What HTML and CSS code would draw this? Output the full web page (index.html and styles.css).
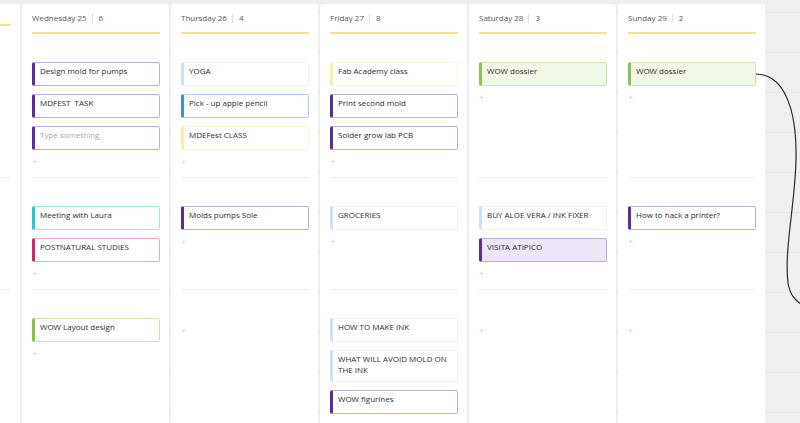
FILE: index.html
```html
<!DOCTYPE html>
<html>
<head>
<meta charset="utf-8">
<link rel="stylesheet" href="styles.css">
</head>
<body>
<div class="board">
  <!-- partial column -->
  <div class="cell cut head"><div class="title"></div><div class="head-line"></div></div>
  <div class="cell cut"><div class="sec"></div></div>
  <div class="cell cut"><div class="sec div"></div></div>
  <div class="cell cut"><div class="sec div"></div></div>

  <!-- Wednesday -->
  <div class="cell head"><div class="title">Wednesday 25<span class="sep"></span>6</div><div class="head-line"></div></div>
  <div class="cell"><div class="sec">
    <div class="card purple">Design mold for pumps</div>
    <div class="card purple">MDFEST&nbsp; TASK</div>
    <div class="card purple placeholder">Type something</div>
    <div class="add">+</div>
  </div></div>
  <div class="cell"><div class="sec div">
    <div class="card cyan">Meeting with Laura</div>
    <div class="card pink">POSTNATURAL STUDIES</div>
    <div class="add">+</div>
  </div></div>
  <div class="cell"><div class="sec div">
    <div class="card green">WOW Layout design</div>
    <div class="add">+</div>
  </div></div>

  <!-- Thursday -->
  <div class="cell head"><div class="title">Thursday 26<span class="sep"></span>4</div><div class="head-line"></div></div>
  <div class="cell"><div class="sec">
    <div class="card pale">YOGA</div>
    <div class="card blue">Pick - up apple pencil</div>
    <div class="card yellow">MDEFest CLASS</div>
    <div class="add">+</div>
  </div></div>
  <div class="cell"><div class="sec div">
    <div class="card purple">Molds pumps Sole</div>
    <div class="add">+</div>
  </div></div>
  <div class="cell"><div class="sec div">
    <div class="add empty">+</div>
  </div></div>

  <!-- Friday -->
  <div class="cell head"><div class="title">Friday 27<span class="sep"></span>8</div><div class="head-line"></div></div>
  <div class="cell"><div class="sec">
    <div class="card yellow">Fab Academy class</div>
    <div class="card purple">Print second mold</div>
    <div class="card purple">Solder grow lab PCB</div>
    <div class="add">+</div>
  </div></div>
  <div class="cell"><div class="sec div">
    <div class="card pale">GROCERIES</div>
    <div class="add">+</div>
  </div></div>
  <div class="cell"><div class="sec div">
    <div class="card pale">HOW TO MAKE INK</div>
    <div class="card pale">WHAT WILL AVOID MOLD ON THE INK</div>
    <div class="card purple">WOW figurines</div>
    <div class="add">+</div>
  </div></div>

  <!-- Saturday -->
  <div class="cell head"><div class="title">Saturday 28<span class="sep"></span>3</div><div class="head-line"></div></div>
  <div class="cell"><div class="sec">
    <div class="card green filled">WOW dossier</div>
    <div class="add">+</div>
  </div></div>
  <div class="cell"><div class="sec div">
    <div class="card pale">BUY ALOE VERA / INK FIXER</div>
    <div class="card purple filled">VISITA ATIPICO</div>
    <div class="add">+</div>
  </div></div>
  <div class="cell"><div class="sec div">
    <div class="add empty">+</div>
  </div></div>

  <!-- Sunday -->
  <div class="cell head"><div class="title">Sunday 29<span class="sep"></span>2</div><div class="head-line"></div></div>
  <div class="cell"><div class="sec">
    <div class="card green filled">WOW dossier</div>
    <div class="add">+</div>
  </div></div>
  <div class="cell"><div class="sec div">
    <div class="card purple">How to hack a printer?</div>
    <div class="add">+</div>
  </div></div>
  <div class="cell"><div class="sec div">
    <div class="add empty">+</div>
  </div></div>
</div>

<svg class="connector" width="800" height="423" viewBox="0 0 800 423">
  <path d="M756 74 C 784 75, 797 108, 796 160 C 795 205, 784 250, 788 283 C 790 295, 795 300, 802 305" fill="none" stroke="#2a2a2a" stroke-width="1.2"/>
</svg>
</body>
</html>
```
FILE: styles.css
```css
html, body {
  margin: 0;
  padding: 0;
}
body {
  width: 800px;
  height: 423px;
  overflow: hidden;
  position: relative;
  background-color: #efefef;
  background-image: repeating-linear-gradient(to bottom, transparent 0, transparent 12px, #e6e6e6 12px, #e6e6e6 13px, transparent 13px, transparent 40px);
  font-family: "Open Sans", "Noto Sans", sans-serif;
  font-size: 8px;
  color: #2b2b2b;
}
.board {
  display: grid;
  grid-template-columns: 20px repeat(5, 147px);
  grid-template-rows: auto auto auto 1fr;
  grid-auto-flow: column;
  column-gap: 2px;
  row-gap: 0;
  padding-top: 4px;
  min-height: 419px;
}
.cell {
  background: #fff;
  padding: 0 9px 0 10px;
}
.cell.cut {
  padding: 0 9px 0 0;
}
.head {
  padding-top: 8px;
  border-radius: 3px 3px 0 0;
}
.cell.cut.head {
  border-radius: 0 3px 0 0;
}
.title {
  display: flex;
  align-items: center;
  height: 12px;
  line-height: 12px;
  color: #555;
  font-size: 8px;
  white-space: nowrap;
}
.sep {
  display: inline-block;
  width: 1px;
  height: 9px;
  background: #dedede;
  margin: 0 6px 0 5px;
}
.head-line {
  margin-top: 8px;
  height: 2px;
  background: #f5e28e;
}
.sec {
  display: flex;
  flex-direction: column;
  gap: 8px;
  padding: 28px 0 9px;
}
.sec.div {
  border-top: 1px solid #ececec;
}
.card {
  box-sizing: border-box;
  min-height: 24px;
  padding: 2px 4px 6px 5px;
  border: 1px solid #eef3f9;
  border-left: 3px solid #cde0f5;
  border-radius: 2px;
  background: #fff;
  line-height: 11px;
  font-size: 8px;
  color: #2b2b2b;
}
.card.placeholder {
  color: #a9a9a9;
}
.card.purple {
  border-color: #bcaadb;
  border-left-color: #5b2d9a;
}
.card.purple.filled {
  background: #ede6f7;
}
.card.pale {
  border-color: #edf2f8;
  border-left-color: #cfe0f4;
}
.card.blue {
  border-color: #a9cdee;
  border-left-color: #3c8fd8;
}
.card.yellow {
  border-color: #fcf5d6;
  border-left-color: #fbefa8;
}
.card.green {
  border-color: #c9e4ad;
  border-left-color: #8cc152;
}
.card.green.filled {
  background: #f1f8ea;
}
.card.cyan {
  border-color: #a2e3ec;
  border-left-color: #2bc3d6;
}
.card.pink {
  border-color: #eaa7c1;
  border-left-color: #d3246c;
}
.add {
  height: 12px;
  line-height: 12px;
  margin-top: -2px;
  font-size: 9px;
  color: #cfcfcf;
}
.add.empty {
  margin-top: 7px;
}
.connector {
  position: absolute;
  left: 0;
  top: 0;
  pointer-events: none;
}
```
